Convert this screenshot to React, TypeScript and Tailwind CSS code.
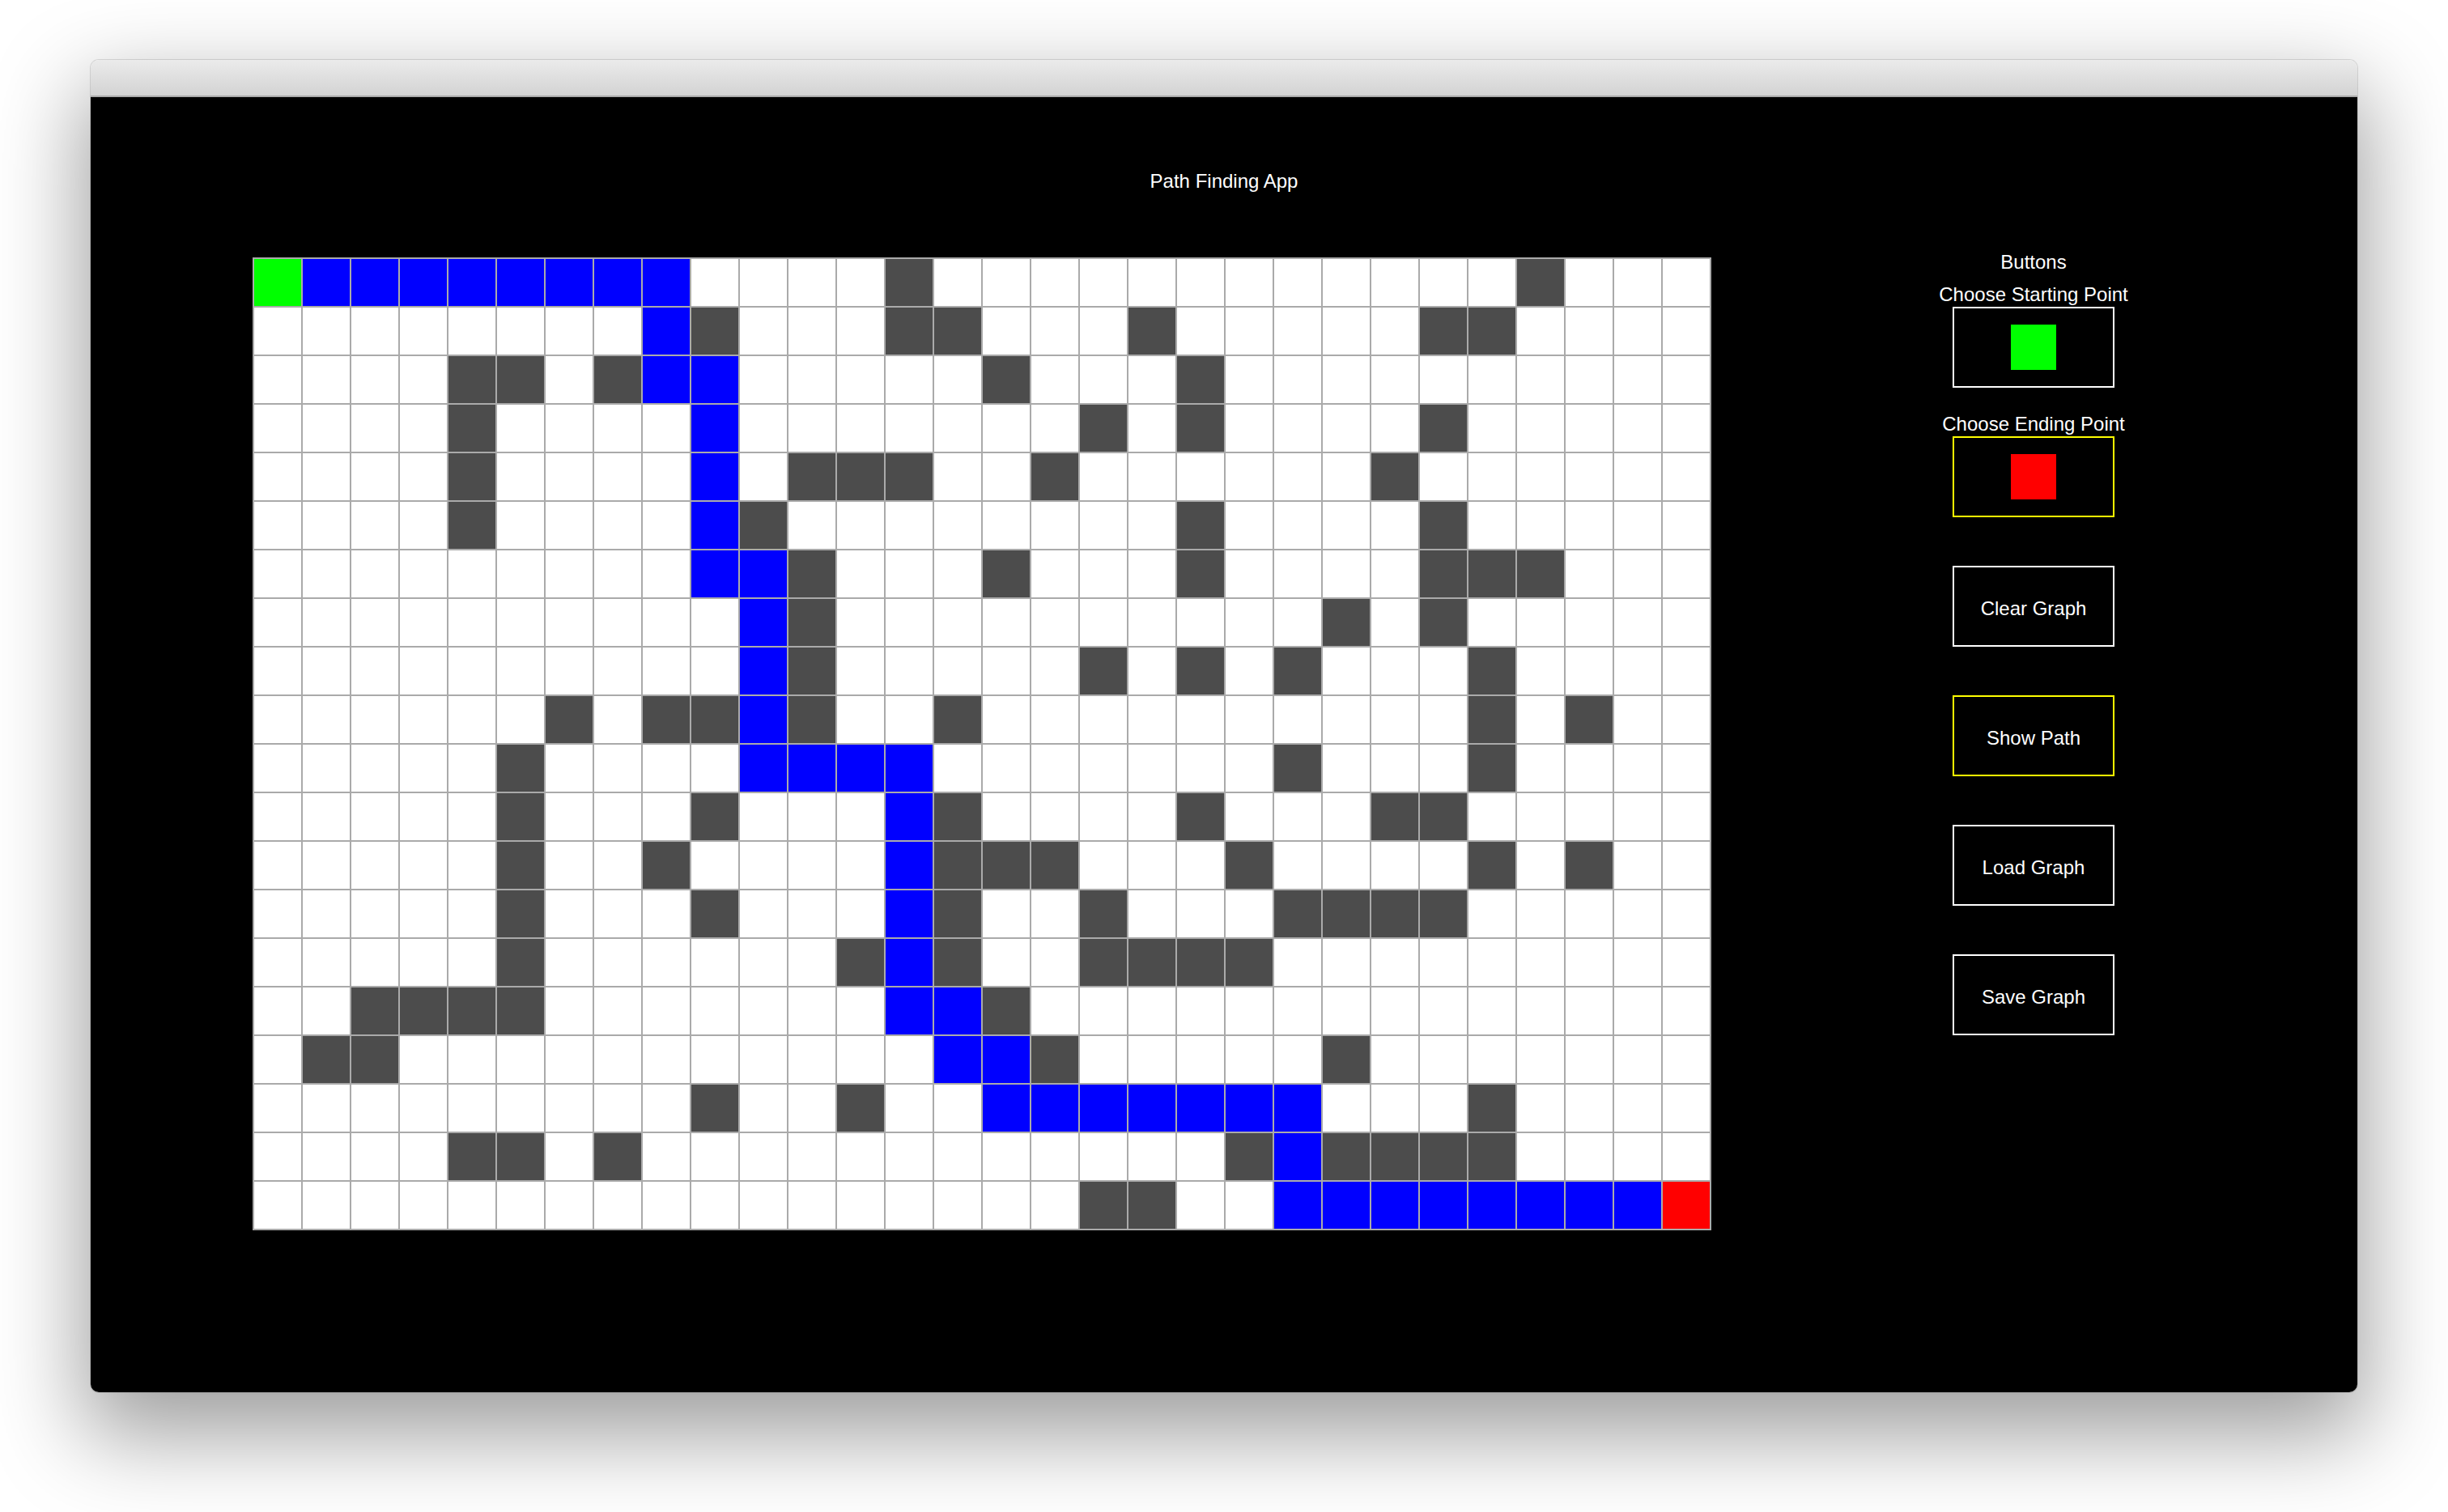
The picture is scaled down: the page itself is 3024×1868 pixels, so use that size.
import React from "react";

// S = start, E = end, B = path, W = wall, . = empty
const GRID = [
  "SBBBBBBBB....W." + "...........W...",
  "........BW...WW" + "...W.....WW....",
  "....WW.WBB....." + "W...W..........",
  "....W....B....." + "..W.W....W.....",
  "....W....B.WWW." + ".W......W......",
  "....W....BW...." + "....W....W.....",
  ".........BBW..." + "W...W....WWW...",
  "..........BW..." + ".......W.W.....",
  "..........BW..." + "..W.W.W...W....",
  "......W.WWBW..W" + "..........W.W..",
  ".....W....BBBB." + "......W...W....",
  ".....W...W...BW" + "....W...WW.....",
  ".....W..W....BW" + "WW...W....W.W..",
  ".....W...W...BW" + "..W...WWWW.....",
  ".....W......WBW" + "..WWWW.........",
  "..WWWW.......BB" + "W..............",
  ".WW...........B" + "BW.....W.......",
  ".........W..W.." + "BBBBBBB...W....",
  "....WW.W......." + ".....WBWWWW....",
  "..............." + "..WW..BBBBBBBBE",
];

const cellColor: Record<string, string> = {
  S: "bg-[#00ff00]",
  E: "bg-[#ff0000]",
  B: "bg-[#0000ff]",
  W: "bg-[#4c4c4c]",
  ".": "bg-white",
};

function Board() {
  return (
    <div className="grid grid-cols-[repeat(30,58px)] auto-rows-[58px] gap-[2px] p-[2px] bg-[#aaaaaa] mt-[8px]">
      {GRID.flatMap((row, r) =>
        row.split("").map((c, i) => (
          <div key={`${r}-${i}`} className={cellColor[c]} />
        ))
      )}
    </div>
  );
}

function PanelButton({ label, active }: { label: string; active?: boolean }) {
  return (
    <button
      className={`w-[200px] h-[100px] bg-black border-2 flex items-center justify-center text-white text-[24px] leading-[28px] pt-[6px] ${
        active ? "border-[#ffff00]" : "border-white"
      }`}
    >
      {label}
    </button>
  );
}

function Controls() {
  return (
    <div className="w-[400px] flex flex-col items-center text-white text-[24px] leading-[28px]">
      <p>Buttons</p>
      <p className="mt-[12px]">Choose Starting Point</p>
      <button className="mt-[1px] w-[200px] h-[100px] border-2 border-white flex items-center justify-center">
        <span className="w-[56px] h-[56px] bg-[#00ff00]" />
      </button>
      <p className="mt-[31px]">Choose Ending Point</p>
      <button className="mt-[1px] w-[200px] h-[100px] border-2 border-[#ffff00] flex items-center justify-center">
        <span className="w-[56px] h-[56px] bg-[#ff0000]" />
      </button>
      <div className="mt-[60px] flex flex-col gap-[60px]">
        <PanelButton label="Clear Graph" />
        <PanelButton label="Show Path" active />
        <PanelButton label="Load Graph" />
        <PanelButton label="Save Graph" />
      </div>
    </div>
  );
}

export default function App() {
  return (
    <div className="w-[3024px] h-[1868px] bg-white pt-[74px] px-[112px] font-['Liberation_Sans',Arial,sans-serif]">
      <div className="w-[2800px] h-[1646px] rounded-[10px] overflow-hidden flex flex-col shadow-[0_0_0_1px_rgba(0,0,0,0.12),0_44px_110px_10px_rgba(0,0,0,0.38)]">
        {/* Title bar */}
        <div className="h-[46px] shrink-0 bg-gradient-to-b from-[#ebebeb] to-[#d3d3d3] border-b-2 border-[#ababab]" />

        {/* Content */}
        <div className="flex-1 bg-black pt-[90px] px-[200px]">
          <h1 className="text-center text-white text-[24px] leading-[28px]">Path Finding App</h1>
          <div className="mt-[72px] flex items-start justify-between">
            <Board />
            <Controls />
          </div>
        </div>
      </div>
    </div>
  );
}
